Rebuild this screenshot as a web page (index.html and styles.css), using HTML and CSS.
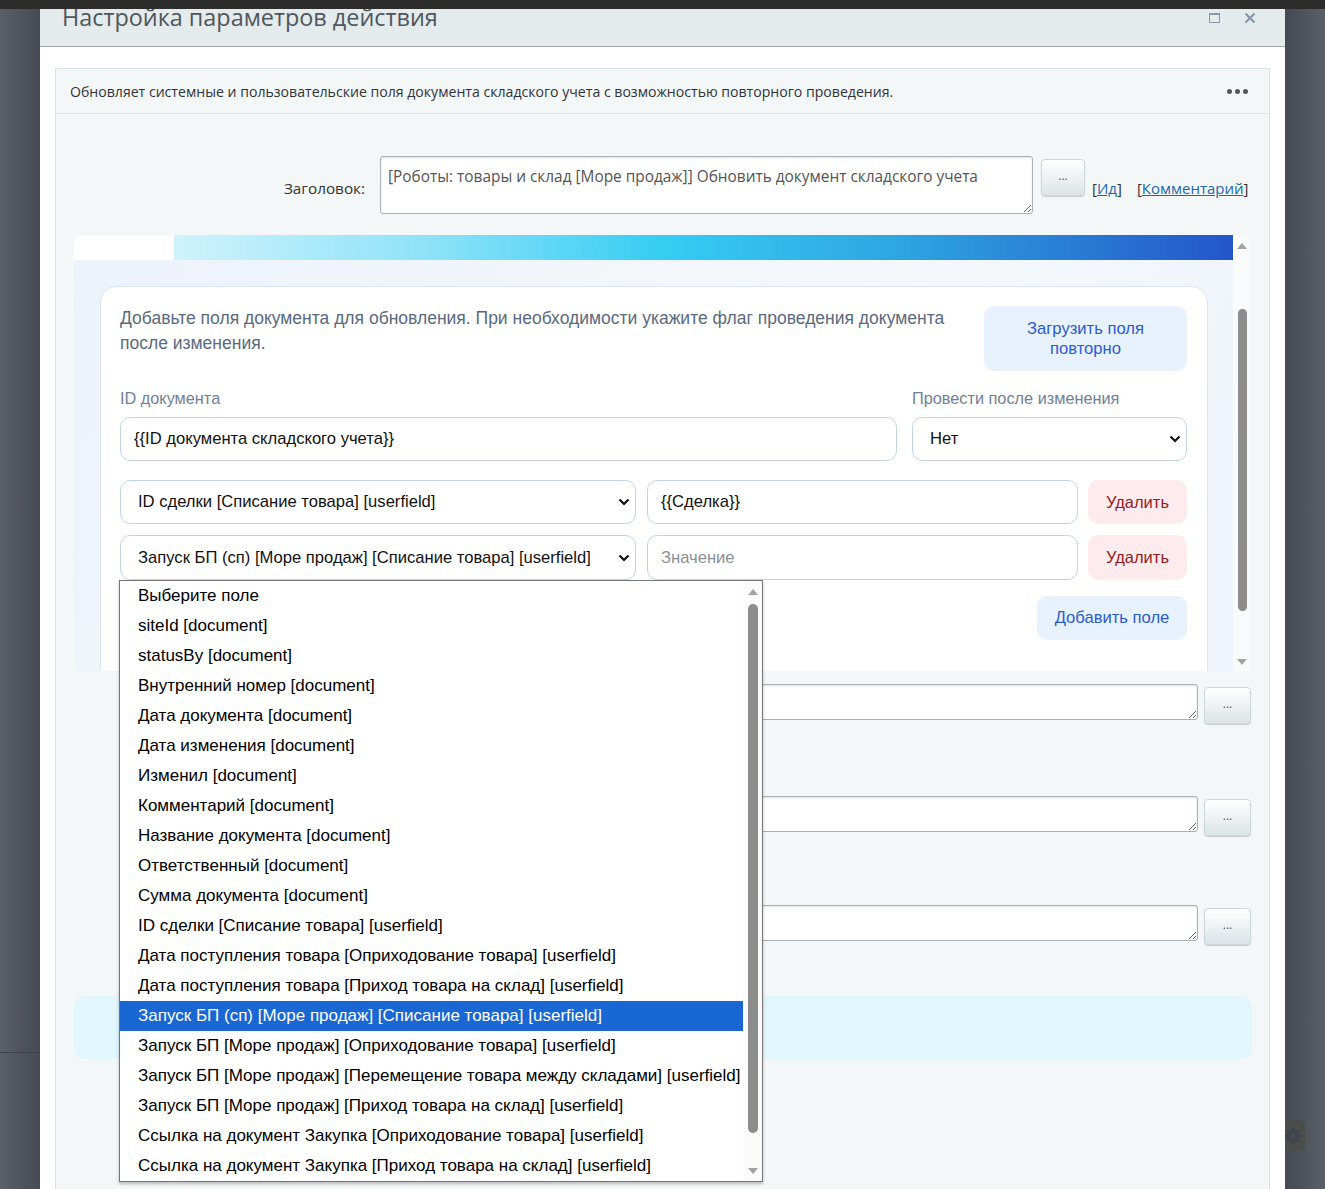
FILE: index.html
```html
<!DOCTYPE html>
<html lang="ru">
<head>
<meta charset="utf-8">
<title>Настройка параметров действия</title>
<link rel="stylesheet" href="styles.css">
</head>
<body>
<div class="topbar"></div>
<div class="stage">
  <div class="gutter gutter-left"><div class="gutter-line"></div></div>
  <div class="dialog">
    <div class="dlg-head">
      <div class="dlg-title">Настройка параметров действия</div>
      <div class="dlg-tools">
        <span class="tool-max"></span>
        <svg class="tool-close" viewBox="0 0 12 12" width="12" height="12"><path d="M1.5 1.5l9 9M10.5 1.5l-9 9" stroke="#8a97a8" stroke-width="2.2" fill="none"/></svg>
      </div>
    </div>
    <div class="dlg-body">
      <div class="panel">
        <div class="desc">
          <span>Обновляет системные и пользовательские поля документа складского учета с возможностью повторного проведения.</span>
          <span class="dots"><i></i><i></i><i></i></span>
        </div>
        <div class="form">
          <div class="title-row">
            <label class="title-label">Заголовок:</label>
            <textarea class="ta ta-title">[Роботы: товары и склад [Море продаж]] Обновить документ складского учета</textarea>
            <button class="btn-dots btn-dots-top">...</button>
            <span class="links">[<a href="#">Ид</a>]</span>
            <span class="links links-2">[<a href="#">Комментарий</a>]</span>
          </div>

          <div class="frame">
            <div class="frame-main">
              <div class="frame-strip"><div class="strip-white"></div><div class="strip-grad"></div></div>
              <div class="frame-content">
                <div class="card">
                  <div class="card-top">
                    <p class="card-text">Добавьте поля документа для обновления. При необходимости укажите флаг проведения документа после изменения.</p>
                    <button class="btn-soft btn-reload">Загрузить поля повторно</button>
                  </div>
                  <div class="id-grid">
                    <div class="lbl">ID документа</div>
                    <div class="lbl">Провести после изменения</div>
                    <input class="inp" type="text" value="{{ID документа складского учета}}">
                    <div class="sel sel-no"><span>Нет</span><svg class="chev" viewBox="0 0 12 8" width="12" height="8"><path d="M1.5 1.5 6 6l4.5-4.5" fill="none" stroke="#111" stroke-width="2.2"/></svg></div>
                  </div>
                  <div class="field-row">
                    <div class="sel sel-field"><span>ID сделки [Списание товара] [userfield]</span><svg class="chev" viewBox="0 0 12 8" width="12" height="8"><path d="M1.5 1.5 6 6l4.5-4.5" fill="none" stroke="#111" stroke-width="2.2"/></svg></div>
                    <input class="inp inp-val" type="text" value="{{Сделка}}">
                    <button class="btn-del">Удалить</button>
                  </div>
                  <div class="field-row field-row-2">
                    <div class="sel sel-field"><span>Запуск БП (сп) [Море продаж] [Списание товара] [userfield]</span><svg class="chev" viewBox="0 0 12 8" width="12" height="8"><path d="M1.5 1.5 6 6l4.5-4.5" fill="none" stroke="#111" stroke-width="2.2"/></svg></div>
                    <input class="inp inp-val" type="text" placeholder="Значение">
                    <button class="btn-del">Удалить</button>
                  </div>
                  <div class="add-row"><button class="btn-soft btn-add">Добавить поле</button></div>
                </div>
              </div>
            </div>
            <div class="frame-scroll">
              <span class="arr arr-up"></span>
              <span class="thumb"></span>
              <span class="arr arr-down"></span>
            </div>
          </div>

          <div class="param-row pr-1">
            <textarea class="ta ta-param"></textarea>
            <button class="btn-dots">...</button>
          </div>
          <div class="param-row pr-2">
            <textarea class="ta ta-param"></textarea>
            <button class="btn-dots">...</button>
          </div>
          <div class="param-row pr-3">
            <textarea class="ta ta-param"></textarea>
            <button class="btn-dots">...</button>
          </div>
          <div class="info-box"></div>
        </div>
      </div>
    </div>

    <div class="listbox">
      <ul class="list-items">
        <li>Выберите поле</li>
        <li>siteId [document]</li>
        <li>statusBy [document]</li>
        <li>Внутренний номер [document]</li>
        <li>Дата документа [document]</li>
        <li>Дата изменения [document]</li>
        <li>Изменил [document]</li>
        <li>Комментарий [document]</li>
        <li>Название документа [document]</li>
        <li>Ответственный [document]</li>
        <li>Сумма документа [document]</li>
        <li>ID сделки [Списание товара] [userfield]</li>
        <li>Дата поступления товара [Оприходование товара] [userfield]</li>
        <li>Дата поступления товара [Приход товара на склад] [userfield]</li>
        <li class="sel-item">Запуск БП (сп) [Море продаж] [Списание товара] [userfield]</li>
        <li>Запуск БП [Море продаж] [Оприходование товара] [userfield]</li>
        <li>Запуск БП [Море продаж] [Перемещение товара между складами] [userfield]</li>
        <li>Запуск БП [Море продаж] [Приход товара на склад] [userfield]</li>
        <li>Ссылка на документ Закупка [Оприходование товара] [userfield]</li>
        <li>Ссылка на документ Закупка [Приход товара на склад] [userfield]</li>
      </ul>
      <div class="list-scroll">
        <span class="arr arr-up"></span>
        <span class="thumb list-thumb"></span>
        <span class="arr arr-down"></span>
      </div>
    </div>
  </div>
  <div class="gutter gutter-right">
    <div class="gear">
      <svg viewBox="0 0 20 20" width="18" height="18"><path d="M8.6 1h2.8l.4 2.4 1.5.7 2-1.4 2 2-1.4 2 .7 1.5 2.4.4v2.8l-2.4.4-.7 1.5 1.4 2-2 2-2-1.4-1.5.7-.4 2.4H8.6l-.4-2.4-1.5-.7-2 1.4-2-2 1.4-2-.7-1.5L1 11.4V8.6l2.4-.4.7-1.5-1.4-2 2-2 2 1.4 1.5-.7zM10 7a3 3 0 1 0 0 6 3 3 0 0 0 0-6z" fill="#3c4350"/></svg>
    </div>
  </div>
</div>
</body>
</html>
```

FILE: styles.css
```css
* { box-sizing: border-box; }
html, body { margin: 0; padding: 0; }
body {
  width: 1325px;
  height: 1189px;
  overflow: hidden;
  font-family: "Open Sans", "Noto Sans", sans-serif;
  color: #333;
  background: #4b5058;
}
.topbar { height: 9px; background: #2c2c2c; }
.stage { display: flex; height: 1180px; }
.gutter { width: 40px; flex: 0 0 40px; position: relative; }
.gutter-left { background: linear-gradient(to right, #5b5f67, #444b55); }
.gutter-line { margin-top: 1043px; height: 1px; background: #3d4148; }
.gutter-right { background: linear-gradient(to right, #434a54, #5b5f67); }
.gear {
  position: absolute; left: 0; top: 1111px;
  width: 20px; height: 31px;
  border-radius: 0 6px 6px 0;
  background: #4b4d4b;
  overflow: hidden;
  display: flex; align-items: center;
}
.gear svg { display: block; margin-left: -1px; }

.dialog {
  width: 1245px; flex: 0 0 1245px;
  background: #fff;
  position: relative;
  overflow: hidden;
  display: flex; flex-direction: column;
}
.dlg-head {
  height: 38px; flex: 0 0 38px;
  background: #e3ebed;
  border-bottom: 1px solid #a4a8aa;
  overflow: hidden;
  display: flex; justify-content: space-between;
}
.dlg-title {
  padding-left: 22px;
  font-size: 23.4px; line-height: 17px;
  color: #50565d;
  white-space: nowrap;
}
.dlg-tools { display: flex; align-items: flex-start; padding-top: 3px; padding-right: 29px; }
.tool-max {
  width: 11px; height: 10px; margin-top: 1px;
  border: 1.5px solid #8a97a8; border-top-width: 2px;
  margin-right: 24px;
}
.tool-close { display: block; margin-top: 0; }

.dlg-body { flex: 1; padding: 21px 15px 0; }
.panel {
  height: 100%;
  background: #f4f7f8;
  border: 1px solid #d9e4e9;
  border-bottom: none;
}
.desc {
  height: 45px;
  border-bottom: 1px solid #d9e4e9;
  display: flex; align-items: center; justify-content: space-between;
  padding: 0 21px 0 14px;
  font-size: 14.1px; color: #2f3338;
}
.dots { display: flex; gap: 3px; }
.dots i { width: 5px; height: 5px; border-radius: 50%; background: #50565d; display: block; }

.form { padding-top: 42px; }
.title-row { display: flex; align-items: center; height: 58px; }
.title-label {
  flex: 0 0 324px; text-align: right; padding-right: 15px;
  font-size: 15.3px; color: #333; padding-top: 5px;
}
.ta {
  resize: vertical;
  border: 1px solid #a9b1b8;
  border-radius: 3px;
  background: #fff;
  box-shadow: inset 0 1px 2px rgba(0,0,0,0.12);
  font-family: "Open Sans", sans-serif;
  font-size: 15.4px; color: #555;
  margin: 0;
}
.ta-title { width: 653px; height: 58px; padding: 10px 7px 6px; line-height: 20px; }
.btn-dots {
  width: 44px; height: 37px;
  margin-left: 8px;
  border: 1px solid #cdd6da;
  border-radius: 4px;
  background: linear-gradient(#ffffff, #dbe4e7);
  box-shadow: 0 1px 1px rgba(0,0,0,0.18);
  font-family: "Open Sans", sans-serif;
  font-size: 12px; color: #555; line-height: 1;
  padding: 0 0 4px;
}
.btn-dots-top { align-self: flex-start; margin-top: 3px; }
.links { font-size: 15px; color: #333; padding-top: 5px; margin-left: 7px; }
.links-2 { margin-left: 15px; }
.links a { color: #2067b0; text-decoration: underline; }

.frame {
  margin: 21px 19px 0 18px;
  height: 436px;
  display: flex;
  border-radius: 9px 9px 0 0;
  overflow: hidden;
}
.frame-main { flex: 1; display: flex; flex-direction: column; overflow: hidden; }
.frame-strip { display: flex; height: 25px; flex: 0 0 25px; }
.strip-white { width: 100px; background: #fff; }
.strip-grad {
  flex: 1;
  background: linear-gradient(to right, #cff3fc 0%, #8ee2f8 24%, #36cdf3 46%, #2ea6e2 68%, #2456c9 100%);
}
.frame-content {
  flex: 1;
  padding: 26px 25px 0 26px;
  background: linear-gradient(120deg, #edf3fb 0%, #f4f8fc 60%, #eef4fc 100%);
  overflow: hidden;
}
.frame-scroll {
  width: 17px; flex: 0 0 17px;
  background: #f9fafb;
  position: relative;
  display: flex; flex-direction: column; align-items: center;
}
.arr { width: 0; height: 0; border-left: 5px solid transparent; border-right: 5px solid transparent; display: block; }
.arr-up { border-bottom: 6px solid #a3a3a3; margin-top: 8px; }
.arr-down { border-top: 6px solid #a3a3a3; margin-top: auto; margin-bottom: 6px; }
.thumb { width: 9px; height: 302px; border-radius: 5px; background: #8c8c8c; margin-top: 60px; margin-left: 1px; }

.card {
  background: #fff;
  border: 1px solid #dae6f2;
  border-radius: 16px;
  padding: 19px 20px 30px 19px;
  font-family: "Liberation Sans", Arial, sans-serif;
  height: 480px;
}
.card-top { display: flex; justify-content: space-between; gap: 30px; }
.card-text {
  margin: 0;
  font-size: 17.5px; line-height: 25px;
  color: #5a6a7e;
}
.btn-soft {
  border: none;
  background: #e8f2fd;
  color: #2b5bd3;
  font-family: "Liberation Sans", Arial, sans-serif;
  font-size: 16.6px; line-height: 20px;
  border-radius: 10px;
}
.btn-reload { flex: 0 0 203px; height: 65px; padding: 0 30px; }
.id-grid {
  display: grid;
  grid-template-columns: 777px 275px;
  column-gap: 15px; row-gap: 9px;
  margin-top: 17px;
}
.lbl { font-size: 16.3px; line-height: 20px; color: #6f8198; }
.inp {
  height: 44px;
  border: 1px solid #c4d4e7;
  border-radius: 10px;
  background: #fff;
  padding: 0 13px;
  font-family: "Liberation Sans", Arial, sans-serif;
  font-size: 16.6px; color: #111;
  margin: 0;
}
.inp::placeholder { color: #8a8f96; }
.sel {
  height: 44px;
  border: 1px solid #c4d4e7;
  border-radius: 10px;
  background: #fff;
  display: flex; align-items: center; justify-content: space-between;
  padding: 0 5px 0 17px;
  font-size: 16.6px; color: #111;
  white-space: nowrap;
}
.chev { display: block; flex: 0 0 auto; }
.field-row { display: flex; gap: 10px; margin-top: 19px; }
.field-row-2 { margin-top: 11px; height: 45px; }
.field-row-2 .sel, .field-row-2 .inp, .field-row-2 .btn-del { height: 45px; }
.sel-field { flex: 0 0 516px; margin-right: 1px; }
.inp-val { flex: 0 0 431px; width: 431px; }
.btn-del {
  flex: 0 0 99px; height: 44px;
  border: none; border-radius: 10px;
  background: #fdebee; color: #961c22;
  font-family: "Liberation Sans", Arial, sans-serif;
  font-size: 16.5px;
}
.add-row { display: flex; justify-content: flex-end; margin-top: 16px; }
.btn-add { width: 150px; height: 44px; }

.param-row { display: flex; align-items: flex-start; padding-left: 324px; height: 40px; }
.ta-param { width: 818px; height: 36px; }
.param-row .btn-dots { width: 47px; margin-left: 6px; margin-top: 3px; }
.pr-1 { margin-top: 13px; }
.pr-2 { margin-top: 72px; }
.pr-3 { margin-top: 69px; }
.info-box {
  margin: 51px 17px 0 18px;
  height: 63px;
  border-radius: 10px;
  background: #e2f6fd;
}

.listbox {
  position: absolute;
  left: 79px; top: 571px;
  width: 644px; height: 602px;
  border: 1px solid #777;
  background: #fff;
  box-shadow: 0 2px 3px rgba(0,0,0,0.25);
  display: flex;
  font-family: "Liberation Sans", Arial, sans-serif;
}
.list-items { list-style: none; margin: 0; padding: 0; flex: 1; overflow: hidden; }
.list-items li {
  height: 30px; line-height: 30px;
  padding-left: 18px;
  font-size: 17px; color: #000;
  white-space: nowrap;
}
.list-items li.sel-item { background: #1967d2; color: #fff; }
.list-scroll {
  width: 19px; flex: 0 0 19px;
  background: #fbfbfb;
  display: flex; flex-direction: column; align-items: center;
}
.list-thumb { height: 529px; width: 10px; margin-top: 9px; margin-left: 0; }
.list-scroll .arr-up { margin-top: 8px; }
.list-scroll .arr-down { margin-bottom: 7px; }
```
